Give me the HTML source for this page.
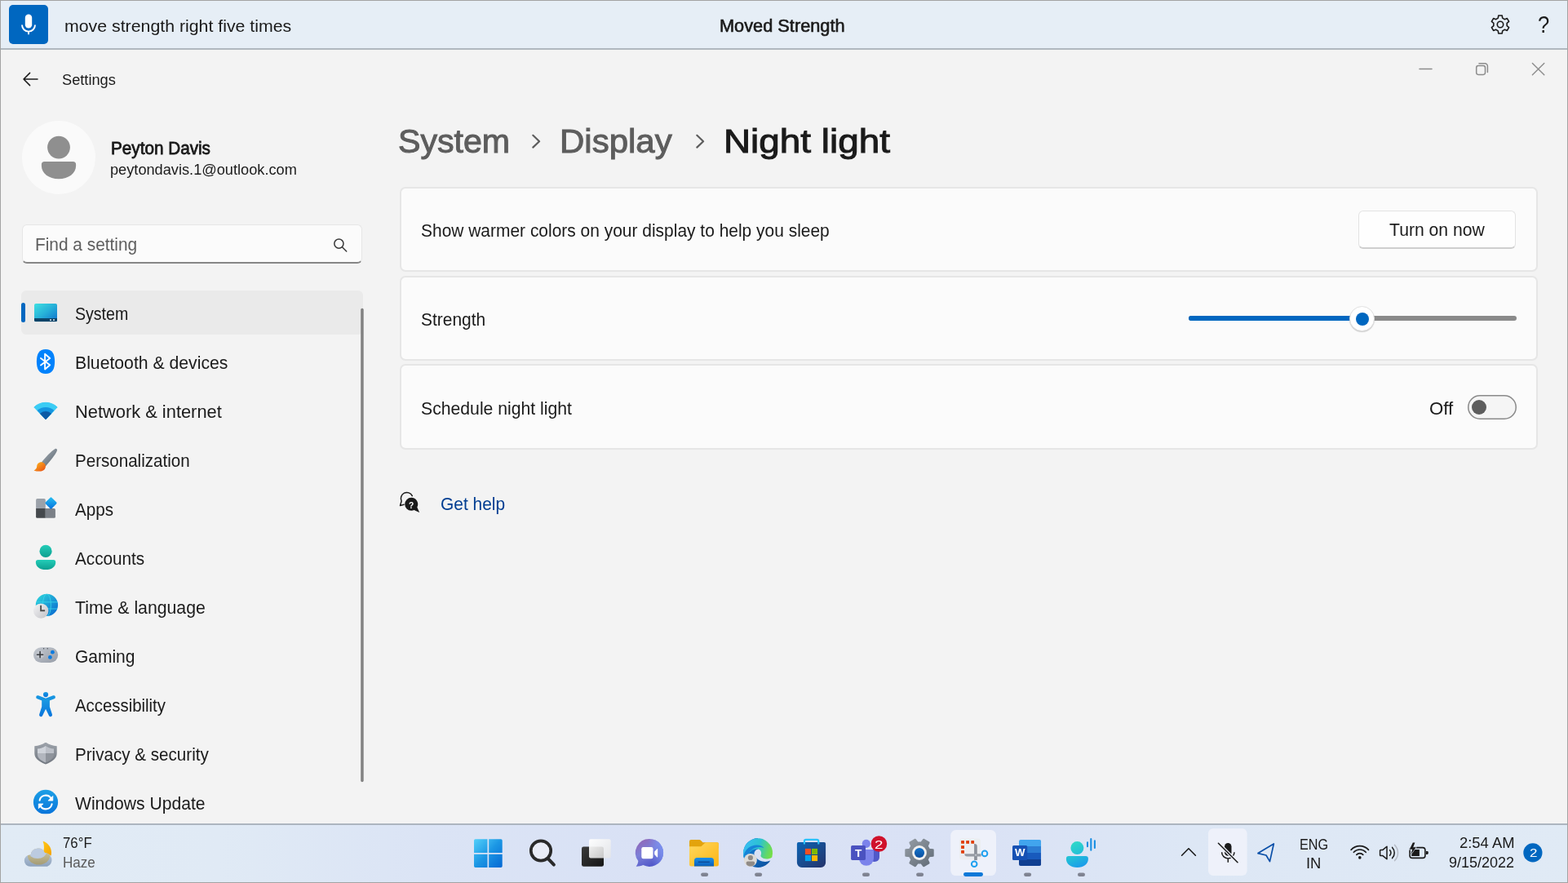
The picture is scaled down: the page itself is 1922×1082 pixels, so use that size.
<!DOCTYPE html>
<html lang="en">
<head>
<meta charset="utf-8">
<title>Settings - Night light</title>
<style>
*{box-sizing:border-box;margin:0;padding:0}
html,body{width:1922px;height:1082px;overflow:hidden;background:#f3f3f3}
body{font-family:"Liberation Sans",sans-serif;color:#1b1b1b;position:relative}
.t{position:absolute;white-space:pre;line-height:1;transform-origin:0 0}
svg{position:absolute;overflow:visible}
.b{position:absolute}
#txt{position:absolute;left:0;top:0;width:1922px;height:1082px;will-change:transform}
#frame{left:0;top:0;width:1922px;height:1082px;border:1px solid #a3a3a3}
#vbar{left:1px;top:1px;width:1920px;height:60px;background:#e6eef6;border-bottom:2px solid #b0b8bf}
#mic{left:11px;top:6px;width:48px;height:48px;border-radius:5px;background:#0067c0}
#win{left:1px;top:61px;width:1920px;height:948px;background:#f3f3f3}
#tbar{left:1px;top:1009px;width:1920px;height:72px;border-top:2px solid #adb5bf;background:linear-gradient(90deg,#e1ebf5 0%,#e0eaf5 14%,#dbe4f5 27%,#d9e1f5 42%,#dae2f5 62%,#dde7f5 76%,#e0eaf5 100%)}
#avatar{left:27px;top:148px;width:90px;height:90px;border-radius:50%;background:#fafafa}
#search{left:27px;top:275px;width:417px;height:48px;border-radius:6px;background:#fbfbfb;border:1px solid #e6e6e6;border-bottom:2px solid #868686}
#sel{left:26px;top:356px;width:419px;height:54px;border-radius:6px;background:#eaeaea}
#selbar{left:26px;top:371px;width:5px;height:24px;border-radius:3px;background:#0067c0}
.card{left:490px;width:1395px;border:2px solid #e6e6e6;border-radius:7px;background:#fbfbfb}
#btn{left:1665px;top:258px;width:193px;height:47px;border-radius:6px;background:#fefefe;border:1px solid #e3e3e3;border-bottom:2px solid #cfcfcf}
#trk{left:1457px;top:387px;width:402px;height:6px;border-radius:3px;background:#8a8a8a}
#trkf{left:1457px;top:387px;width:213px;height:6px;border-radius:3px;background:#0067c0}
#thumb{left:1654px;top:375px;width:31px;height:31px;border-radius:50%;background:#fff;border:1px solid #e2e2e2;box-shadow:0 1px 1px rgba(0,0,0,.18)}
#thumbi{left:1662px;top:383px;width:16px;height:16px;border-radius:50%;background:#0067c0}
#tog{left:1799px;top:484px;width:60px;height:30px;border-radius:15px;background:#f5f5f5;box-shadow:inset 0 0 0 1.5px #8a8a8a}
#knob{left:1804px;top:490px;width:18px;height:18px;border-radius:50%;background:#5d5d5d}
</style>
</head>
<body>
<div class="b" id="vbar"></div>
<div class="b" id="mic"></div>
<div class="b" id="win"></div>
<div class="b" id="avatar"></div>
<div class="b" id="search"></div>
<div class="b" id="sel"></div><div class="b" id="selbar"></div>
<div class="b card" style="top:229px;height:104px"></div>
<div class="b card" style="top:338px;height:104px"></div>
<div class="b card" style="top:446px;height:105px"></div>
<div class="b" id="btn"></div>
<div class="b" id="trk"></div><div class="b" id="trkf"></div><div class="b" id="thumb"></div><div class="b" id="thumbi"></div>
<div class="b" id="tog"></div><div class="b" id="knob"></div>
<div class="b" id="tbar"></div>
<svg class="ic" width="1922" height="1082" viewBox="0 0 1922 1082" style="left:0;top:0">
<!-- mic -->
<rect x="30.8" y="17.6" width="8.4" height="17" rx="4.2" fill="#fff"/>
<path d="M27 30.6a8 8 0 0 0 16 0M35 38.6v3.6" fill="none" stroke="#fff" stroke-width="1.9" stroke-linecap="butt"/>
<!-- gear -->
<path d="M1836.30 22.15 L1836.77 19.02 L1841.23 19.02 L1841.70 22.15 L1844.45 23.74 L1847.39 22.58 L1849.62 26.45 L1847.15 28.42 L1847.15 31.58 L1849.62 33.55 L1847.39 37.42 L1844.45 36.26 L1841.70 37.85 L1841.23 40.98 L1836.77 40.98 L1836.30 37.85 L1833.55 36.26 L1830.61 37.42 L1828.38 33.55 L1830.85 31.58 L1830.85 28.42 L1828.38 26.45 L1830.61 22.58 L1833.55 23.74Z" fill="none" stroke="#1a1a1a" stroke-width="1.6" stroke-linejoin="round"/>
<circle cx="1839" cy="30" r="3.7" fill="none" stroke="#1a1a1a" stroke-width="1.6"/>
<!-- back arrow -->
<path d="M46 97H29M36.6 89.4L29 97l7.6 7.6" fill="none" stroke="#1b1b1b" stroke-width="1.5" stroke-linecap="round" stroke-linejoin="round"/>
<!-- window controls -->
<path d="M1740 84.4h15" stroke="#8c8c8c" stroke-width="1.5" stroke-linecap="round" fill="none"/>
<rect x="1809.7" y="80.6" width="10.8" height="10.8" rx="2.3" fill="none" stroke="#8c8c8c" stroke-width="1.5"/>
<path d="M1813 77.8h7.2a3.2 3.2 0 0 1 3.2 3.2v7.4" fill="none" stroke="#8c8c8c" stroke-width="1.5" stroke-linecap="round"/>
<path d="M1878.4 77.4l14.4 14.4M1892.8 77.4l-14.4 14.4" stroke="#8c8c8c" stroke-width="1.4" stroke-linecap="round" fill="none"/>
<!-- avatar -->
<circle cx="72" cy="180.6" r="13.9" fill="#8f8f8f"/>
<path d="M54.5 198h35a3.6 3.6 0 0 1 3.6 3.6v1.6c0 9-9 16-21.1 16s-21.1-7-21.1-16v-1.6a3.6 3.6 0 0 1 3.6-3.6z" fill="#8f8f8f"/>
<!-- search icon -->
<circle cx="415.4" cy="298.6" r="5.6" fill="none" stroke="#3a3a3a" stroke-width="1.5"/>
<path d="M419.5 302.8l5.2 5.2" stroke="#3a3a3a" stroke-width="1.5" stroke-linecap="round"/>
<!-- breadcrumb chevrons -->
<path d="M653.3 165.8l7.8 7.4-7.8 7.4" fill="none" stroke="#5d5d5d" stroke-width="2.2" stroke-linecap="round" stroke-linejoin="round"/>
<path d="M854.3 165.8l7.8 7.4-7.8 7.4" fill="none" stroke="#5d5d5d" stroke-width="2.2" stroke-linecap="round" stroke-linejoin="round"/>
<!-- get help icon -->
<path d="M505.3 607.6a7.3 7.3 0 1 0-13.2 6.4l-1.6 5.6 4.6-1.4" fill="none" stroke="#1a1a1a" stroke-width="1.5" stroke-linejoin="round" stroke-linecap="round"/>
<path d="M504.2 609.8a8 8 0 1 0 0 16 8 8 0 0 0 3.4-.8l6.6 2.9-2.9-6.3a8 8 0 0 0-7.1-11.8z" fill="#1a1a1a"/>
</svg>

<svg width="1922" height="1082" viewBox="0 0 1922 1082" style="left:0;top:0">
<defs>
<linearGradient id="gSys" x1="0" y1="0" x2="1" y2="1"><stop offset="0" stop-color="#3fe0e2"/><stop offset=".5" stop-color="#26b0d8"/><stop offset="1" stop-color="#0f6fcc"/></linearGradient>
<linearGradient id="gBrH" x1="0" y1="0" x2="1" y2="1"><stop offset="0" stop-color="#a9b1b8"/><stop offset="1" stop-color="#56626d"/></linearGradient>
<linearGradient id="gBrT" x1="0" y1="0" x2="1" y2="1"><stop offset="0" stop-color="#ffbe1c"/><stop offset="1" stop-color="#e64a17"/></linearGradient>
<linearGradient id="gDia" x1="0" y1="0" x2="1" y2="1"><stop offset="0" stop-color="#27c0f2"/><stop offset="1" stop-color="#0670dc"/></linearGradient>
<linearGradient id="gAcc" x1="0" y1="0" x2="0" y2="1"><stop offset="0" stop-color="#24cdb8"/><stop offset="1" stop-color="#0c9f90"/></linearGradient>
<linearGradient id="gGlobe" x1="0" y1="0" x2="1" y2="1"><stop offset="0" stop-color="#2fdadc"/><stop offset=".5" stop-color="#1d9fd6"/><stop offset="1" stop-color="#0562cf"/></linearGradient>
<linearGradient id="gClock" x1="0" y1="0" x2="1" y2="1"><stop offset="0" stop-color="#f4f4f6"/><stop offset="1" stop-color="#c2c2c6"/></linearGradient>
<linearGradient id="gPad" x1="0" y1="0" x2="1" y2="1"><stop offset="0" stop-color="#c3c8cf"/><stop offset="1" stop-color="#979da8"/></linearGradient>
<linearGradient id="gA11" x1="0" y1="0" x2="0" y2="1"><stop offset="0" stop-color="#1a9ae2"/><stop offset="1" stop-color="#0874dc"/></linearGradient>
<linearGradient id="gShO" x1="0" y1="0" x2="0" y2="1"><stop offset="0" stop-color="#9da3ab"/><stop offset="1" stop-color="#70767f"/></linearGradient>
<linearGradient id="gUpd" x1="0" y1="0" x2="0" y2="1"><stop offset="0" stop-color="#1ca0e6"/><stop offset="1" stop-color="#0873da"/></linearGradient>
<clipPath id="cSys"><rect x="42" y="372" width="28" height="22.2" rx="2"/></clipPath>
<clipPath id="cGlobe"><circle cx="57.4" cy="741.4" r="13.6"/></clipPath>
<clipPath id="cShield"><path d="M56 914c-3.2 2.2-6.4 3.2-10 3.6v6.6c0 4.600 3.6 7.400 10 10.200c6.400-2.800 10-5.600 10-10.200v-6.600c-3.600-.4-6.800-1.400-10-3.600z"/></clipPath>
<clipPath id="cNav"><rect x="0" y="61" width="460" height="936.2"/></clipPath>
</defs>
<!-- System -->
<g clip-path="url(#cSys)"><rect x="42" y="372" width="28" height="22.2" fill="url(#gSys)"/><rect x="42" y="390" width="28" height="4.2" fill="#0b4468"/><rect x="61" y="391.200" width="2" height="1.800" fill="#c4d2dc"/><rect x="65" y="391.200" width="2" height="1.800" fill="#c4d2dc"/></g>
<!-- Bluetooth -->
<path d="M56 428c8 0 11.100 5.600 11.100 15s-3.100 15-11.100 15-11.100-5.600-11.100-15 3.100-15 11.100-15z" fill="#0082fc"/>
<path d="M50 438.900l11.200 8.300-6.100 5.300v-18.800l6.100 5.300-11.200 8.400" fill="none" stroke="#fff" stroke-width="1.9" stroke-linejoin="round" stroke-linecap="round"/>
<!-- Network -->
<path d="M56 513.9L41.82 498.96A20.6 20.6 0 0 1 70.18 498.96Z" fill="#3bccf4" stroke="#3bccf4" stroke-width="1" stroke-linejoin="round"/>
<path d="M56 513.9L45.67 503.02A15 15 0 0 1 66.33 503.02Z" fill="#1595e0"/>
<path d="M56 513.9L49.32 506.86A9.7 9.7 0 0 1 62.68 506.86Z" fill="#0c59a4" stroke="#0c59a4" stroke-width=".6" stroke-linejoin="round"/>
<!-- Personalization -->
<path d="M50.400 567.200C56 560 62.600 553 67.200 550.200c1.800-1.100 3.400 .3 2.600 2.300-2.400 5.600-8.600 12.800-14.200 19.300z" fill="url(#gBrH)"/>
<path d="M45.200 571.600c0-3 2.400-5.400 5.300-5.400 3 0 5.400 2.400 5.400 5.400 0 3.400-2.800 6-7 6-3 0-5.600-.3-7.400-1.200 2.400-1 3.700-2.600 3.700-4.800z" fill="url(#gBrT)"/>
<!-- Apps -->
<path d="M44.100 612.700a1.600 1.600 0 0 1 1.600-1.600h8.500a1.600 1.600 0 0 1 1.600 1.600v10.400h-11.700z" fill="#9ba1a9"/>
<path d="M44.100 623.100h11.700v11.700h-10.100a1.600 1.600 0 0 1-1.600-1.600z" fill="#45494d"/>
<path d="M55.800 623.100h10.500a1.600 1.600 0 0 1 1.600 1.600v8.500a1.600 1.600 0 0 1-1.600 1.600h-10.500z" fill="#7b8087"/>
<rect x="57.100" y="611" width="10.800" height="10.800" rx="1.600" transform="rotate(45 62.500 616.400)" fill="url(#gDia)"/>
<!-- Accounts -->
<circle cx="56.050" cy="675.400" r="7.600" fill="url(#gAcc)"/>
<path d="M46.600 686h18.900a2.700 2.700 0 0 1 2.700 2.700v.5c0 5-4.800 8.900-12.150 8.900s-12.150-3.900-12.150-8.900v-.5a2.700 2.700 0 0 1 2.700-2.700z" fill="url(#gAcc)"/>
<!-- Time & language -->
<circle cx="57.400" cy="741.400" r="13.600" fill="url(#gGlobe)"/>
<g clip-path="url(#cGlobe)" fill="none" stroke="#3ad6ea" stroke-width="1" opacity=".85"><path d="M43 737.800h29M43 746h29"/><ellipse cx="57.400" cy="741.400" rx="5" ry="13.600"/></g>
<circle cx="50.200" cy="748.600" r="9.200" fill="url(#gClock)"/>
<path d="M50.100 741.800v6.400h5" fill="none" stroke="#505050" stroke-width="1.900" stroke-linejoin="miter"/>
<!-- Gaming -->
<rect x="41" y="793.200" width="30.100" height="18.800" rx="9.400" fill="url(#gPad)"/>
<circle cx="49.100" cy="802.200" r="5" fill="#c8ccd2" opacity=".6"/>
<path d="M45.500 802.200h7.200M49.100 798.600v7.200" stroke="#3a3d42" stroke-width="1.600" stroke-linecap="round"/>
<circle cx="64.400" cy="799.200" r="2.400" fill="#0b7be0"/><circle cx="61.400" cy="805.400" r="2.400" fill="#0b7be0"/>
<circle cx="53.600" cy="794.700" r=".7" fill="#4a4e55"/><circle cx="58.200" cy="794.700" r=".7" fill="#4a4e55"/>
<!-- Accessibility -->
<circle cx="56.050" cy="851.100" r="3.100" fill="url(#gA11)"/>
<path d="M46.300 854.300L56.050 858l9.750-3.700" fill="none" stroke="#1694e1" stroke-width="4.200" stroke-linecap="round" stroke-linejoin="round"/>
<path d="M51.200 857h9.700v9l3 9.300a2.100 2.100 0 0 1-4 1.400l-3.850-8-3.850 8a2.100 2.100 0 0 1-4-1.400l3-9.300z" fill="url(#gA11)"/>
<!-- Privacy -->
<path d="M56 909.600c-4.200 3-8.600 4.200-13.700 4.600v8.800c0 6 4.800 10 13.700 13.600 8.900-3.600 13.700-7.600 13.700-13.600v-8.800c-5.100-.4-9.500-1.600-13.700-4.600z" fill="url(#gShO)"/>
<g clip-path="url(#cShield)"><rect x="44" y="912" width="12" height="11" fill="#cfd3da"/><rect x="56" y="912" width="12" height="11" fill="#bcc0c8"/><rect x="44" y="923" width="12" height="13" fill="#b2b6be"/><rect x="56" y="923" width="12" height="13" fill="#8f949c"/></g>
<!-- Windows Update -->
<g clip-path="url(#cNav)">
<circle cx="56" cy="982.900" r="15.100" fill="url(#gUpd)"/>
<path d="M48.600 980.600a7.600 7.600 0 0 1 14-2.200M63.600 985.400a7.600 7.600 0 0 1-14 2.200" fill="none" stroke="#fff" stroke-width="2.100" stroke-linecap="round"/>
<path d="M64.800 975.400v5.700h-5.700zM47.300 990.700v-5.700h5.700z" fill="#fff" stroke="#fff" stroke-width=".8" stroke-linejoin="round"/>
</g>
</svg>

<svg width="1922" height="1082" viewBox="0 0 1922 1082" style="left:0;top:0">
<rect x="442.200" y="377.800" width="3.500" height="580.400" rx="1.750" fill="#828282"/>
<circle cx="1878.900" cy="1044.900" r="11.600" fill="#0067c0"/>
</svg>

<svg width="1922" height="1082" viewBox="0 0 1922 1082" style="left:0;top:0">
<defs>
<linearGradient id="tStart" x1="0" y1="0" x2="1" y2="1"><stop offset="0" stop-color="#52d0fa"/><stop offset=".5" stop-color="#1b96e4"/><stop offset="1" stop-color="#0468d4"/></linearGradient>
<linearGradient id="tTv" x1="0" y1="0" x2="1" y2="1"><stop offset="0" stop-color="#fff" stop-opacity=".97"/><stop offset="1" stop-color="#e6e6e6" stop-opacity=".8"/></linearGradient>
<linearGradient id="tDark" x1="0" y1="0" x2="1" y2="1"><stop offset="0" stop-color="#3a3a3a"/><stop offset="1" stop-color="#161616"/></linearGradient>
<linearGradient id="tChat" x1=".15" y1="0" x2=".7" y2="1"><stop offset="0" stop-color="#9465b4"/><stop offset=".45" stop-color="#7b7fd8"/><stop offset="1" stop-color="#4b52c6"/></linearGradient>
<linearGradient id="tChat2" x1="0" y1=".5" x2="1" y2=".3"><stop offset=".5" stop-color="#7b8ff0" stop-opacity="0"/><stop offset="1" stop-color="#7b93f0"/></linearGradient>
<linearGradient id="tFold" x1="0" y1="0" x2="1" y2="1"><stop offset="0" stop-color="#ffd85e"/><stop offset="1" stop-color="#fdb515"/></linearGradient>
<linearGradient id="tFoldB" x1="0" y1="0" x2="0" y2="1"><stop offset="0" stop-color="#1c90e6"/><stop offset="1" stop-color="#0a5fbc"/></linearGradient>
<linearGradient id="tEdgeT" x1="0" y1=".3" x2="1" y2=".55"><stop offset="0" stop-color="#38bcf4"/><stop offset=".5" stop-color="#2cc2d2"/><stop offset=".85" stop-color="#62d868"/><stop offset="1" stop-color="#74de48"/></linearGradient>
<linearGradient id="tEdgeB" x1="0" y1="0" x2="1" y2="1"><stop offset="0" stop-color="#1b8fe0"/><stop offset=".55" stop-color="#1268bc"/><stop offset="1" stop-color="#0b4d98"/></linearGradient>
<linearGradient id="tStore" x1="0" y1="0" x2="1" y2="1"><stop offset="0" stop-color="#0c64b4"/><stop offset="1" stop-color="#25336a"/></linearGradient>
<linearGradient id="tGear" x1="0" y1="0" x2="1" y2="1"><stop offset="0" stop-color="#949ca4"/><stop offset="1" stop-color="#626c77"/></linearGradient>
<linearGradient id="tGearB" x1="0" y1="0" x2="0" y2="1"><stop offset="0" stop-color="#1474cc"/><stop offset="1" stop-color="#0d4f9e"/></linearGradient>
<linearGradient id="tVoice" gradientUnits="userSpaceOnUse" x1="1313" y1="1031" x2="1327" y2="1063"><stop offset="0" stop-color="#32dcc6"/><stop offset=".55" stop-color="#22bdd8"/><stop offset="1" stop-color="#1a98ec"/></linearGradient>
<linearGradient id="tMoon" x1="0" y1="0" x2="1" y2="1"><stop offset="0" stop-color="#ffc818"/><stop offset="1" stop-color="#f5a200"/></linearGradient>
<linearGradient id="tCloud" x1="0" y1="0" x2="0" y2="1"><stop offset="0" stop-color="#c5d4e6"/><stop offset="1" stop-color="#8da2bc"/></linearGradient>
<linearGradient id="tHaze" x1="0" y1="0" x2="0" y2="1"><stop offset="0" stop-color="#d8cc9a"/><stop offset="1" stop-color="#a89a68"/></linearGradient>
<clipPath id="cWord"><rect x="1249" y="1029" width="27.2" height="32" rx="2"/></clipPath>
<clipPath id="cEdge"><circle cx="929.1" cy="1045" r="18.1"/></clipPath>
<clipPath id="cCloud"><path d="M37 1061.800a7.200 7.200 0 0 1 0-14.400h.6a9 9 0 0 1 17.200-2.400 8.700 8.700 0 0 1 3.200 16.800z"/></clipPath>
</defs>
<!-- weather -->
<path d="M52.600 1030.800c6 1.600 10.400 7.400 10.400 14 0 1.200-.1 2.400-.4 3.600-3.200-2-7.200-2.600-10.400-1.800 2.200-4.800 2.400-10.800.4-15.800z" fill="url(#tMoon)"/>
<path d="M37 1061.800a7.200 7.200 0 0 1 0-14.400h.6a9 9 0 0 1 17.200-2.400 8.700 8.700 0 0 1 3.200 16.800z" fill="url(#tCloud)"/>
<g clip-path="url(#cCloud)"><ellipse cx="47.500" cy="1049" rx="13.500" ry="10.500" fill="url(#tHaze)" opacity=".85"/><ellipse cx="46" cy="1044" rx="11" ry="8" fill="#bccbe0"/></g>
<!-- start -->
<path d="M581 1029.900a1.700 1.700 0 0 1 1.700-1.700h14.800v16.800h-16.500zM599.200 1028.200h14.800a1.700 1.700 0 0 1 1.700 1.700v15.100h-16.500zM581 1046.700h16.500v16.200h-14.800a1.700 1.700 0 0 1-1.700-1.700zM599.200 1046.700h16.500v14.500a1.700 1.700 0 0 1-1.700 1.700h-14.800z" fill="url(#tStart)"/>
<!-- search -->
<circle cx="663" cy="1042.500" r="12.200" fill="#e9ecf6" stroke="#2a2a2a" stroke-width="3.700"/>
<path d="M672 1052.400l6.900 7.200" stroke="#2a2a2a" stroke-width="4" stroke-linecap="round"/>
<!-- task view -->
<rect x="713" y="1037.400" width="27" height="24.400" rx="2.400" fill="url(#tDark)"/>
<rect x="722" y="1028.200" width="26.700" height="23.400" rx="2" fill="url(#tTv)"/>
<!-- chat -->
<path d="M796.100 1027.900a17 17 0 1 1-7.800 32.100c-2.600 1.200-5.600 1.800-8.600 1.700 1.600-2 2.400-4.200 2.600-6.600a17 17 0 0 1 13.800-27.200z" fill="url(#tChat)"/>
<path d="M796.100 1027.900a17 17 0 1 1-7.800 32.100c-2.600 1.200-5.600 1.800-8.600 1.700 1.600-2 2.400-4.200 2.600-6.600a17 17 0 0 1 13.800-27.200z" fill="url(#tChat2)"/>
<rect x="786.300" y="1038" width="14.200" height="14.300" rx="2.200" fill="#fff"/>
<path d="M802.200 1043.600l3.200-3.400c.4-.4.800-.2.800.3v9.600c0 .5-.4.700-.8.300l-3.200-3.400z" fill="#fff"/>
<!-- explorer -->
<path d="M845 1031a2 2 0 0 1 2-2h10.200c.8 0 1.500.3 2 .9l2.300 2.400h17.400a2 2 0 0 1 2 2v5h-35.900z" fill="#e3a30c"/>
<path d="M845 1037.300l13 0c.9 0 1.700-.3 2.300-.9l3.400-3.200c.6-.6 1.400-.9 2.300-.9h12.900a2 2 0 0 1 2 2v25.100a2 2 0 0 1-2 2h-31.900a2 2 0 0 1-2-2z" fill="url(#tFold)"/>
<path d="M851 1061.400v-7a3.500 3.500 0 0 1 3.500-3.500h17a3.500 3.500 0 0 1 3.500 3.500v7z" fill="url(#tFoldB)"/>
<path d="M855.800 1056.300h14" stroke="#0d4c9a" stroke-width="1.500"/>
<!-- edge -->
<g transform="translate(929.1 1045)">
<path d="M-18 0A18 18 0 0 0 15.200 9.600C9 12.400 1 11.200-4.200 3.500C-5.600 0-3.500-4 0-4.600L0-17.900A18 18 0 0 0-18 0Z" fill="url(#tEdgeB)"/>
<path d="M-18 1.500A18 18 0 1 1 17.200 5.400C13.400 8.200 7.200 8.200 4.400 5.600C3.300 4.600 3.100 3.500 3.700 2.300C5 -1 2.600-4.700-1-4.700C-7.600-4.700-12.200 0-12.600 6.500C-13 9-14 10-15.500 9.200C-17.200 7-18 4.400-18 1.500Z" fill="url(#tEdgeT)"/>
<path d="M-17.600 3.800C-16-4.600-9-9.600-1.600-9.600C2.800-9.600 6-8 7.400-5.800C4.400-7.300 1-7.400-2-6.600C-8-5-12.200 0-12.600 6.500C-13 9.400-14.600 10-15.700 8.800C-17 7-17.800 5.400-17.600 3.800Z" fill="#1684d8"/>
</g>
<circle cx="919.900" cy="1054" r="8" fill="#dedcd8"/>
<circle cx="919.900" cy="1051" r="3.100" fill="#908b87"/>
<path d="M914.600 1057.400a2 2 0 0 1 2-2h6.600a2 2 0 0 1 2 2c0 2.400-2.200 4-5.300 4s-5.300-1.600-5.300-4z" fill="#908b87"/>
<!-- store -->
<path d="M976.900 1034a2 2 0 0 1 2-2h31.200a2 2 0 0 1 2 2v22.900a6 6 0 0 1-6 6h-23.200a6 6 0 0 1-6-6z" fill="url(#tStore)"/>
<path d="M985.900 1034.600v-3.700a2 2 0 0 1 2-2h13.400a2 2 0 0 1 2 2v3.700" fill="none" stroke="#2cc2fa" stroke-width="2.100"/>
<rect x="986.900" y="1039.900" width="7.100" height="7.100" fill="#f25022"/><rect x="995" y="1039.900" width="7.100" height="7.100" fill="#7fba00"/><rect x="986.900" y="1048" width="7.100" height="7.100" fill="#00a4ef"/><rect x="995" y="1048" width="7.100" height="7.100" fill="#ffb900"/>
<!-- teams -->
<circle cx="1061.800" cy="1033.800" r="5.100" fill="#7b83eb"/>
<path d="M1068 1041h8.400a1.600 1.600 0 0 1 1.600 1.600v7.600a5.800 5.800 0 0 1-10 4z" fill="#5059c9"/>
<path d="M1053 1041h16.400a1.600 1.600 0 0 1 1.600 1.600v9.200a9 9 0 0 1-18 0z" fill="#7b83eb"/>
<rect x="1043.100" y="1036" width="17.900" height="17.900" rx="1.600" fill="#4a52c0"/>
<circle cx="1077.400" cy="1034" r="9.800" fill="#d0112b"/>
<!-- settings gear -->
<path d="M1138.88 1040.79 L1143.60 1041.32 L1143.60 1048.68 L1138.88 1049.21 L1136.58 1053.18 L1138.49 1057.53 L1132.11 1061.21 L1129.30 1057.39 L1124.70 1057.39 L1121.89 1061.21 L1115.51 1057.53 L1117.42 1053.18 L1115.12 1049.21 L1110.40 1048.68 L1110.40 1041.32 L1115.12 1040.79 L1117.42 1036.82 L1115.51 1032.47 L1121.89 1028.79 L1124.70 1032.61 L1129.30 1032.61 L1132.11 1028.79 L1138.49 1032.47 L1136.58 1036.82Z" fill="url(#tGear)" stroke="url(#tGear)" stroke-width="2.2" stroke-linejoin="round"/>
<circle cx="1127" cy="1045" r="8.900" fill="#f0f0f0"/>
<circle cx="1127" cy="1045" r="6.100" fill="url(#tGearB)"/>
<!-- snipping tool -->
<rect x="1165.200" y="1017" width="55.800" height="56.100" rx="6.500" fill="#eef1fa"/>
<rect x="1181" y="1069" width="24" height="4.900" rx="2.450" fill="#0c78d8"/>
<rect x="1176" y="1027.600" width="26" height="26" rx="3" fill="#ebedf0"/>
<g fill="#e03c00"><rect x="1178.100" y="1030.100" width="3.900" height="3.700" rx=".6"/><rect x="1184.200" y="1030.100" width="3.800" height="3.700"/><rect x="1190.300" y="1030.100" width="3.800" height="3.700" rx=".6"/><rect x="1178.100" y="1036.200" width="3.900" height="3.700"/><rect x="1178.100" y="1042.100" width="3.900" height="3.700" rx=".6"/></g>
<path d="M1194.100 1034h.4a3.300 3.300 0 0 1 3.300 3.300v16.700h-3.700z" fill="#8b9099"/>
<path d="M1182.300 1046.200h20.300v3.300h-17a3.300 3.300 0 0 1-3.300-3.300z" fill="#969ba3"/>
<circle cx="1196" cy="1047.800" r="1" fill="#c8ccd2"/>
<circle cx="1207" cy="1045.900" r="3.300" fill="none" stroke="#1ea0f0" stroke-width="2"/>
<circle cx="1194.200" cy="1058.700" r="3.300" fill="none" stroke="#1ea0f0" stroke-width="2"/>
<!-- word -->
<g clip-path="url(#cWord)"><rect x="1249" y="1029" width="27.200" height="8" fill="#41a5ee"/><rect x="1249" y="1037" width="27.200" height="8" fill="#2b7cd3"/><rect x="1249" y="1045" width="27.200" height="8" fill="#185abd"/><rect x="1249" y="1053" width="27.200" height="8" fill="#103f91"/></g>
<rect x="1241" y="1036" width="18.200" height="18" rx="1.600" fill="#1651b4"/>
<!-- voice access -->
<circle cx="1320.400" cy="1039.100" r="8" fill="url(#tVoice)"/>
<path d="M1310 1049.100h20.800a3.100 3.100 0 0 1 3.100 3.100v.5c0 5.600-5.400 10.200-13.500 10.200s-13.500-4.600-13.500-10.200v-.5a3.100 3.100 0 0 1 3.100-3.100z" fill="url(#tVoice)"/>
<path d="M1333 1032.200v5M1337.300 1028v13.800M1341.900 1030.200v8.800" stroke="#1a8fe2" stroke-width="2.100" stroke-linecap="round"/>
<rect x="859.1" y="1069.4" width="9" height="4.5" rx="2.25" fill="#7f8391"/><rect x="925.1" y="1069.4" width="9" height="4.5" rx="2.25" fill="#7f8391"/><rect x="1057" y="1069.4" width="9" height="4.5" rx="2.25" fill="#7f8391"/><rect x="1123.1" y="1069.4" width="9" height="4.5" rx="2.25" fill="#7f8391"/><rect x="1255.1" y="1069.4" width="9" height="4.5" rx="2.25" fill="#7f8391"/><rect x="1321" y="1069.4" width="9" height="4.5" rx="2.25" fill="#7f8391"/>
<!-- tray chevron -->
<path d="M1448.600 1048.200l8.400-8.400 8.400 8.400" fill="none" stroke="#1a1a1a" stroke-width="1.600" stroke-linecap="round" stroke-linejoin="round"/>
<!-- mic muted -->
<rect x="1481" y="1015.300" width="47.600" height="57.600" rx="6" fill="#eef1fa"/>
<rect x="1501" y="1033" width="8.500" height="15.700" rx="4.250" fill="#1a1a1a"/>
<path d="M1497.600 1044.200a7.700 7.700 0 0 0 15.400 0M1505.300 1052v4.800" fill="none" stroke="#1a1a1a" stroke-width="1.500"/>
<path d="M1493.400 1033.200l23.600 23.600" stroke="#eef1fa" stroke-width="4"/>
<path d="M1493.400 1033.200l23.600 23.600" stroke="#1a1a1a" stroke-width="1.500" stroke-linecap="round"/>
<!-- location -->
<path d="M1542 1045.600l19.300-11.600-4.800 21.600-4.500-7.600z" fill="none" stroke="#0a4fa8" stroke-width="1.700" stroke-linejoin="round"/>
<!-- wifi -->
<g fill="none" stroke="#1a1a1a" stroke-width="1.600" stroke-linecap="round"><path d="M1662.79 1047.39A5.4 5.4 0 0 1 1670.81 1047.39"/><path d="M1659.37 1044.31A10 10 0 0 1 1674.23 1044.31"/><path d="M1656.10 1041.36A14.4 14.4 0 0 1 1677.50 1041.36"/></g>
<circle cx="1666.800" cy="1050.900" r="1.800" fill="#1a1a1a"/>
<!-- volume -->
<path d="M1700 1037.200v15.600l-5-4.200h-2.600a.8.800 0 0 1-.8-.8v-5.600a.8.800 0 0 1 .8-.8h2.600z" fill="none" stroke="#1a1a1a" stroke-width="1.500" stroke-linejoin="round"/>
<g fill="none" stroke-linecap="round" stroke-width="1.500"><path d="M1703.600 1041.800a5 5 0 0 1 0 6.400" stroke="#1a1a1a"/><path d="M1706.600 1038.400a9.600 9.600 0 0 1 0 13.200" stroke="#1a1a1a"/><path d="M1709.600 1035.400a13.800 13.800 0 0 1 0 19.200" stroke="#b4bac4"/></g>
<!-- battery -->
<rect x="1728.100" y="1038.600" width="18.800" height="12.800" rx="3" fill="none" stroke="#1a1a1a" stroke-width="1.600"/>
<path d="M1748 1043h1.400a1.400 1.400 0 0 1 1.400 1.400v1.200a1.400 1.400 0 0 1-1.400 1.400h-1.400z" fill="#1a1a1a"/>
<path d="M1733.600 1041h6.300v8h-9.700v-3z" fill="#1a1a1a"/>
<path d="M1731.800 1032.600l-4 8.200h3.400l-2 6.400 6.600-9h-3.600l2.200-5.600z" fill="#1a1a1a" stroke="#e0e9f4" stroke-width="1.200" paint-order="stroke"/>
</svg>

<div id="txt">
<div class="t" style="left:79.27px;top:22px;font-size:20.6px;color:#1a1a1a;transform:scaleX(1.0346)">move strength right five times</div>
<div class="t" style="left:882.43px;top:21px;font-size:21.2px;color:#1a1a1a;transform:scaleX(1.0269);-webkit-text-stroke:.6px #1a1a1a">Moved Strength</div>
<div class="t" style="left:76.33px;top:89px;font-size:18.3px;color:#1b1b1b;transform:scaleX(0.9967)">Settings</div>
<div class="t" style="left:136.27px;top:172px;font-size:21.3px;color:#1a1a1a;transform:scaleX(0.9718);-webkit-text-stroke:.8px #1a1a1a">Peyton Davis</div>
<div class="t" style="left:135.31px;top:199px;font-size:18.3px;color:#1b1b1b;transform:scaleX(0.9952)">peytondavis.1@outlook.com</div>
<div class="t" style="left:43.26px;top:290px;font-size:21.3px;color:#5f5f5f;transform:scaleX(0.9785)">Find a setting</div>
<div class="t" style="left:92.37px;top:375px;font-size:21.3px;color:#1b1b1b;transform:scaleX(0.9188)">System</div>
<div class="t" style="left:92.45px;top:435px;font-size:21.3px;color:#1b1b1b;transform:scaleX(0.9956)">Bluetooth &amp; devices</div>
<div class="t" style="left:91.89px;top:495px;font-size:21.3px;color:#1b1b1b;transform:scaleX(1.0262)">Network &amp; internet</div>
<div class="t" style="left:92.12px;top:555px;font-size:21.3px;color:#1b1b1b;transform:scaleX(0.9654)">Personalization</div>
<div class="t" style="left:92.46px;top:615px;font-size:21.3px;color:#1b1b1b;transform:scaleX(0.9684)">Apps</div>
<div class="t" style="left:92.24px;top:675px;font-size:21.3px;color:#1b1b1b;transform:scaleX(0.9726)">Accounts</div>
<div class="t" style="left:92.36px;top:735px;font-size:21.3px;color:#1b1b1b;transform:scaleX(0.9973)">Time &amp; language</div>
<div class="t" style="left:91.82px;top:795px;font-size:21.3px;color:#1b1b1b;transform:scaleX(0.9850)">Gaming</div>
<div class="t" style="left:92.40px;top:855px;font-size:21.3px;color:#1b1b1b;transform:scaleX(0.9568)">Accessibility</div>
<div class="t" style="left:91.97px;top:915px;font-size:21.3px;color:#1b1b1b;transform:scaleX(0.9677)">Privacy &amp; security</div>
<div class="t" style="left:92.20px;top:975px;font-size:21.3px;color:#1b1b1b;transform:scaleX(0.9910)">Windows Update</div>
<div class="t" style="left:487.90px;top:153px;font-size:40px;color:#5d5d5d;transform:scaleX(1.0283);-webkit-text-stroke:1px #5d5d5d">System</div>
<div class="t" style="left:685.64px;top:153px;font-size:40px;color:#5d5d5d;transform:scaleX(1.0502);-webkit-text-stroke:1px #5d5d5d">Display</div>
<div class="t" style="left:886.79px;top:153px;font-size:40px;color:#1a1a1a;transform:scaleX(1.1465);-webkit-text-stroke:1px #1a1a1a">Night light</div>
<div class="t" style="left:515.96px;top:273px;font-size:21.3px;color:#1b1b1b;transform:scaleX(0.9838)">Show warmer colors on your display to help you sleep</div>
<div class="t" style="left:515.86px;top:382px;font-size:21.3px;color:#1b1b1b;transform:scaleX(0.9829)">Strength</div>
<div class="t" style="left:516.18px;top:491px;font-size:21.3px;color:#1b1b1b;transform:scaleX(0.9952)">Schedule night light</div>
<div class="t" style="left:1702.90px;top:272px;font-size:21.3px;color:#1b1b1b;transform:scaleX(0.9927)">Turn on now</div>
<div class="t" style="left:1752.07px;top:491px;font-size:21.3px;color:#1b1b1b;transform:scaleX(1.0430)">Off</div>
<div class="t" style="left:540.18px;top:608px;font-size:21.3px;color:#003e92;transform:scaleX(0.9818)">Get help</div>
<div class="t" style="left:76.91px;top:1024px;font-size:18.3px;color:#1a1a1a;transform:scaleX(0.9180)">76°F</div>
<div class="t" style="left:76.84px;top:1048px;font-size:18.3px;color:#5a5a5a;transform:scaleX(0.9330)">Haze</div>
<div class="t" style="left:1593.41px;top:1026px;font-size:18.3px;color:#1a1a1a;transform:scaleX(0.8844)">ENG</div>
<div class="t" style="left:1600.80px;top:1049px;font-size:18.3px;color:#1a1a1a;transform:scaleX(1.0069)">IN</div>
<div class="t" style="left:1789.34px;top:1024px;font-size:18.3px;color:#1a1a1a;transform:scaleX(1.0062)">2:54 AM</div>
<div class="t" style="left:1775.77px;top:1048px;font-size:18.3px;color:#1a1a1a;transform:scaleX(0.9847)">9/15/2022</div>
<div class="t" style="left:1874.88px;top:1037px;font-size:15px;color:#ffffff;transform:scaleX(1.1331)">2</div>
<div class="t" style="left:1071.69px;top:1027px;font-size:15px;color:#ffffff;transform:scaleX(1.2484)">2</div>
<div class="t" style="left:1243.55px;top:1039px;font-size:12.5px;color:#ffffff;transform:scaleX(1.0592);font-weight:700">W</div>
<div class="t" style="left:500.89px;top:614px;font-size:11.5px;color:#ffffff;transform:scaleX(0.8859);font-weight:700">?</div>
<div class="t" style="left:1047.90px;top:1039px;font-size:13.5px;color:#ffffff;transform:scaleX(1.0098);font-weight:700">T</div>
<div class="t" style="left:1885.09px;top:15px;font-size:29.5px;color:#1a1a1a;transform:scaleX(0.8685);font-family:"DejaVu Sans",sans-serif;font-weight:200">?</div>
</div>
<div class="b" id="frame"></div>
</body>
</html>
